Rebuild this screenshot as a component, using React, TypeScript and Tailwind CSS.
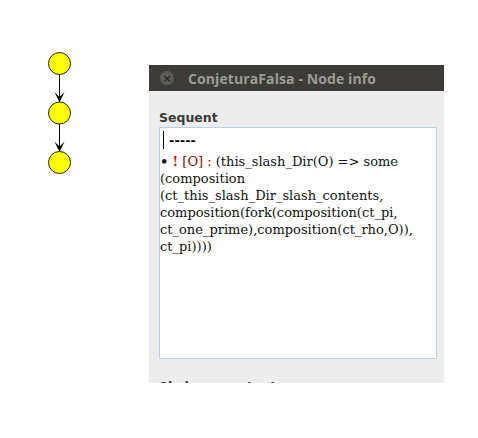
import React from "react";

function Graph() {
  const ys = [63.5, 113, 162.5];
  return (
    <svg className="absolute left-0 top-0" width="120" height="200" viewBox="0 0 120 200">
      {[0, 1].map((i) => (
        <g key={i}>
          <line x1="59.5" y1={ys[i] + 11} x2="59.5" y2={ys[i + 1] - 14} stroke="#000" strokeWidth="1" />
          <path
            d={`M59.5 ${ys[i + 1] - 10.5} L54.5 ${ys[i + 1] - 21} L59.5 ${ys[i + 1] - 16} L64.5 ${ys[i + 1] - 21} Z`}
            fill="#000"
          />
        </g>
      ))}
      {ys.map((y, i) => (
        <circle key={i} cx="59.5" cy={y} r="11" fill="#ffff00" stroke="#222" strokeWidth="1" />
      ))}
    </svg>
  );
}

export default function App() {
  return (
    <div className="relative w-[478px] h-[438px] bg-white overflow-hidden">
      <Graph />
      <div className="absolute left-[149px] top-[65px] w-[295px] h-[318px] overflow-hidden flex flex-col bg-[#ededed]">
        <div className="h-[26px] bg-[#3c3b37] flex items-center shrink-0">
          <div className="ml-[11px] w-[14px] h-[14px] rounded-full bg-[#5c5b57] flex items-center justify-center text-[#2c2b28] text-[11px] leading-none font-bold" style={{ fontFamily: '"DejaVu Sans", sans-serif' }}>
            ×
          </div>
          <div className="ml-[14px] text-[14px] font-bold text-[#9d9b95] tracking-[0.1px]" style={{ fontFamily: '"Open Sans", sans-serif' }}>
            ConjeturaFalsa - Node info
          </div>
        </div>
        <div className="pl-[10px] pr-[7px] flex flex-col">
          <div className="mt-[19px] h-[16px] leading-[16px] text-[12.5px] font-bold text-[#3a3a3a]" style={{ fontFamily: '"DejaVu Sans", sans-serif' }}>
            Sequent
          </div>
          <div className="mt-[1px] w-[278px] h-[232px] bg-white border border-[#b9d0e8] pl-[0px] pt-[2px]" style={{ fontFamily: '"DejaVu Serif", serif' }}>
            <div className="h-[20px] flex items-center">
              <div className="w-[1px] h-[18px] bg-black ml-[3px]" />
              <span className="ml-[5px] font-bold text-[13px] text-black leading-none">-----</span>
            </div>
            <div className="mt-[3px] text-[13px] leading-[17px] text-[#111]">
              <span className="font-bold">•</span>{" "}
              <span className="font-bold text-[#e00000]">!</span>{" "}
              <span className="text-[#7a1200]">[O] :</span> (this_slash_Dir(O) =&gt; some
              <br />
              (composition
              <br />
              (ct_this_slash_Dir_slash_contents,
              <br />
              composition(fork(composition(ct_pi,
              <br />
              ct_one_prime),composition(ct_rho,O)),
              <br />
              ct_pi))))
            </div>
          </div>
          <div className="mt-[20px] h-[16px] leading-[16px] text-[12.5px] font-bold text-[#3a3a3a]" style={{ fontFamily: '"DejaVu Sans", sans-serif' }}>
            Skolem constants
          </div>
        </div>
      </div>
    </div>
  );
}
